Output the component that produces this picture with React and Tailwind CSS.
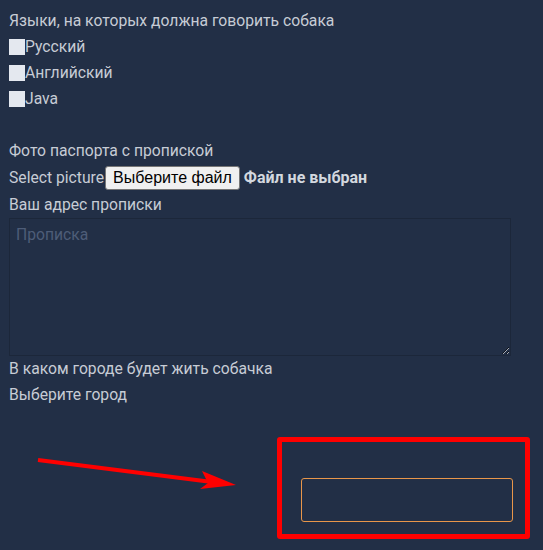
import React from 'react';

export default function App() {
  return (
    <div className="relative min-h-[550px] bg-[#222f46] text-[#c7ccd5] font-['Roboto',sans-serif] text-[15.7px] leading-[26px]">
      <form className="px-[9px] pt-[8px]">
        <div>Языки, на которых должна говорить собака</div>
        {['Русский', 'Английский', 'Java'].map((lang) => (
          <label key={lang} className="flex items-center">
            <input type="checkbox" className="appearance-none w-4 h-4 bg-[#e4e8ef] m-0" />
            <span>{lang}</span>
          </label>
        ))}
        <div className="h-[26px]"></div>

        <div>Фото паспорта с пропиской</div>
        <div className="flex items-center h-[28px]">
          <span>Select picture</span>
          <button
            type="button"
            className="ml-px h-[24px] px-[7px] bg-[#f0f0f0] border border-[#767676] rounded-[3px] text-black font-['Liberation_Sans',Arial,sans-serif] text-[16px] leading-none"
          >
            Выберите файл
          </button>
          <span className="ml-[4px] font-bold text-[16px] text-[#d3d8df]">Файл не выбран</span>
        </div>

        <div>Ваш адрес прописки</div>
        <textarea
          placeholder="Прописка"
          className="block w-[502px] h-[138px] bg-[#222f46] border border-[#1c273a] px-[6px] py-[3px] text-[15.7px] leading-[26px] placeholder:text-[#4e5d78] outline-none [color-scheme:dark]"
        ></textarea>

        <div>В каком городе будет жить собачка</div>
        <div>Выберите город</div>

        <div className="flex justify-end pr-[21px] pt-[70px]">
          <div className="w-[212px] h-[44px] border border-[#e8964a] rounded-[3px]"></div>
        </div>
      </form>

      <div className="absolute left-[277px] top-[437px] w-[253px] h-[102px] border-[5px] border-[#ff0000] rounded-[3px] pointer-events-none"></div>
      <svg className="absolute left-0 top-0 pointer-events-none" width="543" height="550">
        <line x1="38" y1="460" x2="212" y2="482" stroke="#ff0000" strokeWidth="4" />
        <polygon points="236,485 202,471 208,483 200,489" fill="#ff0000" />
      </svg>
    </div>
  );
}
